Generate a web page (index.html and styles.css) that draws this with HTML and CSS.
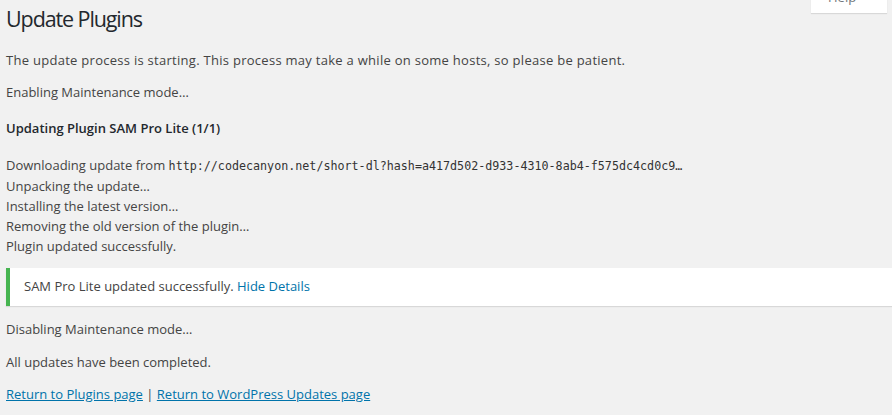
FILE: index.html
```html
<!DOCTYPE html>
<html>
<head>
<meta charset="utf-8">
<link rel="stylesheet" href="styles.css">
</head>
<body>
<div class="help-tab"><span>Help</span><span class="arrow">&#9662;</span></div>
<div class="wrap">
  <h1>Update Plugins</h1>
  <p class="intro">The update process is starting. This process may take a while on some hosts, so please be patient.</p>
  <p>Enabling Maintenance mode&hellip;</p>
  <h4>Updating Plugin SAM Pro Lite (1/1)</h4>
  <div class="log">
    <div>Downloading update from <span class="code">http://codecanyon.net/short-dl?hash=a417d502-d933-4310-8ab4-f575dc4cd0c9&hellip;</span></div>
    <div>Unpacking the update&hellip;</div>
    <div>Installing the latest version&hellip;</div>
    <div>Removing the old version of the plugin&hellip;</div>
    <div>Plugin updated successfully.</div>
  </div>
  <div class="notice">
    <p>SAM Pro Lite updated successfully. <a href="#">Hide Details</a></p>
  </div>
  <p class="after-notice">Disabling Maintenance mode&hellip;</p>
  <p>All updates have been completed.</p>
  <p><a class="ul" href="#">Return to Plugins page</a> | <a class="ul" href="#">Return to WordPress Updates page</a></p>
</div>
</body>
</html>
```

FILE: styles.css
```css
html, body {
  margin: 0;
  padding: 0;
  background: #f1f1f1;
  overflow: hidden;
}
body {
  font-family: "Open Sans", sans-serif;
  font-size: 13px;
  color: #444;
  line-height: 1.5;
}
.wrap {
  padding: 4px 0 0 6px;
}
h1 {
  font-size: 21.5px;
  letter-spacing: -1.1px;
  font-weight: 400;
  line-height: 29.9px;
  margin: 0 0 17px;
  color: #23282d;
}
p {
  margin: 13px 0;
}
.intro {
  letter-spacing: 0.28px;
}
h4 {
  font-size: 13px;
  font-weight: 600;
  line-height: 17px;
  margin: 17px 0 19.5px;
  color: #23282d;
}
.log {
  line-height: 19.8px;
}
.code {
  font-family: "DejaVu Sans Mono", monospace;
  font-size: 11.7px;
  color: #333;
}
.notice {
  margin-top: 11.3px;
  background: #fff;
  border-left: 4px solid #46b450;
  box-shadow: 0 1px 1px 0 rgba(0,0,0,.1);
  padding: 1px 12px;
}
.notice p {
  margin: 6.5px 0;
  padding: 2px;
}
.after-notice {
  margin-top: 14.2px;
}
a {
  color: #0073aa;
  text-decoration: none;
}
a.ul {
  text-decoration: underline;
}
.help-tab {
  position: absolute;
  top: -13px;
  right: 5px;
  width: 76px;
  height: 26px;
  background: #fff;
  box-shadow: 0 1px 1px rgba(0,0,0,.1);
  color: #72777c;
  font-family: "Open Sans", sans-serif;
  font-size: 13px;
  line-height: 20px;
  box-sizing: border-box;
  padding-left: 17px;
  display: flex;
  gap: 9px;
}
.help-tab .arrow {
  font-size: 9px;
  color: #a0a5aa;
}
```
